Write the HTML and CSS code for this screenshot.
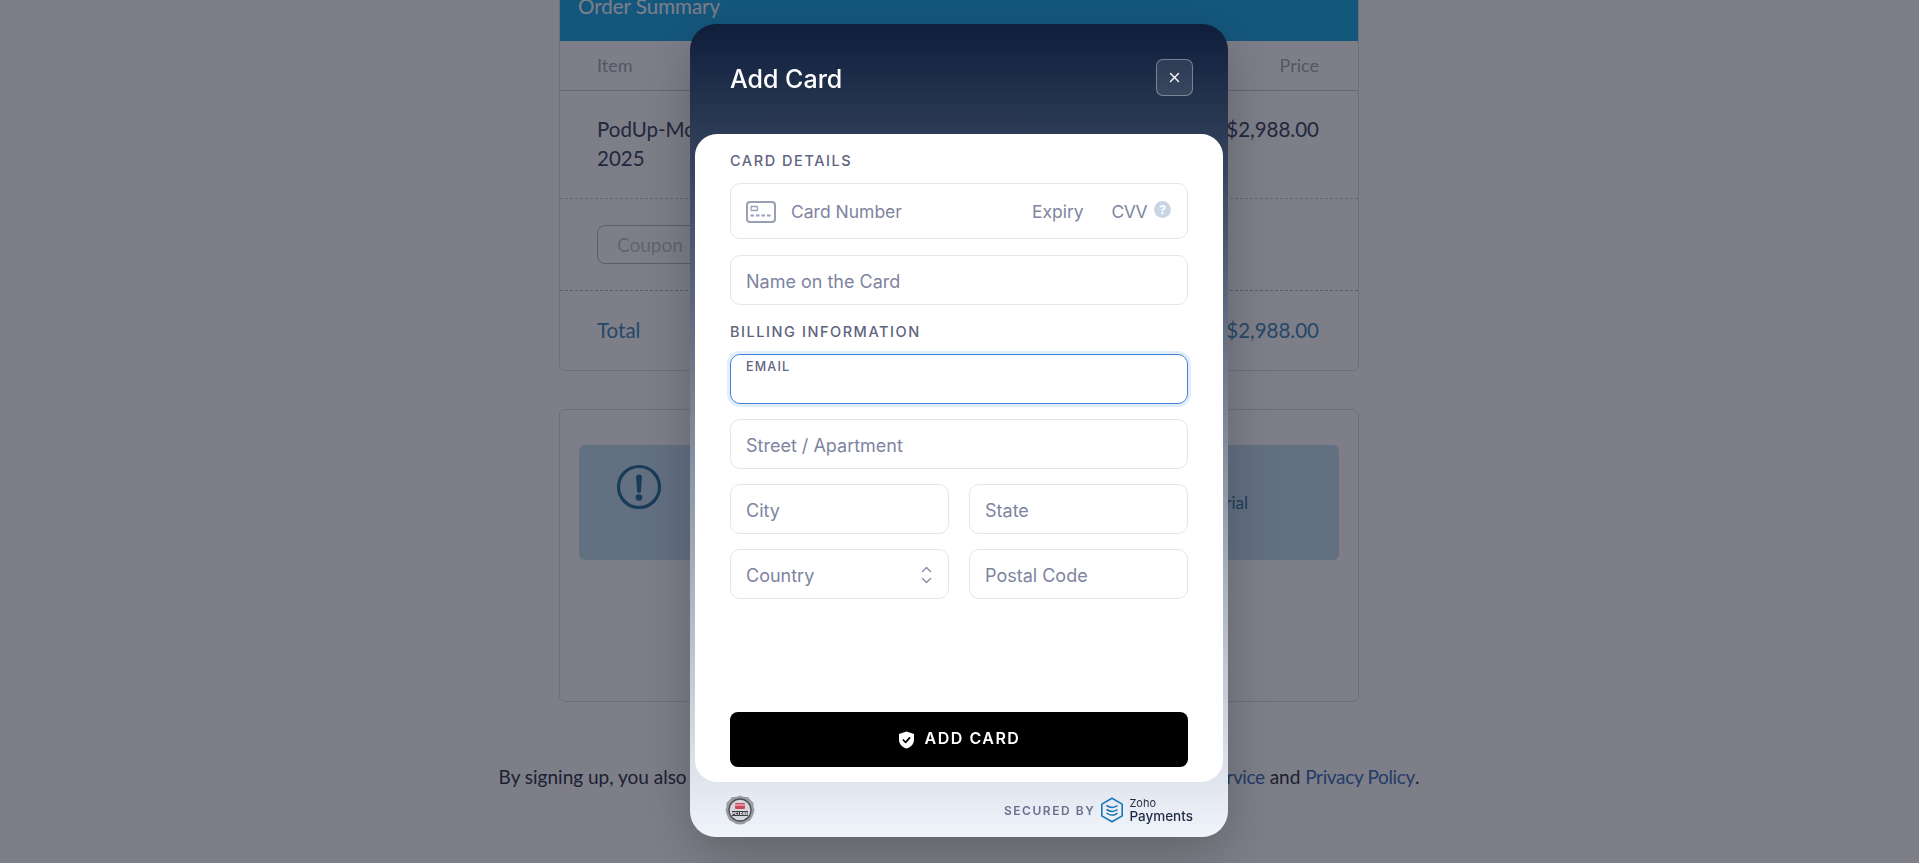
FILE: index.html
```html
<!DOCTYPE html>
<html lang="en">
<head>
<meta charset="utf-8">
<title>Add Card</title>
<link rel="stylesheet" href="styles.css">
</head>
<body>
<main class="page">
  <section class="card order">
    <header class="order-head">Order Summary</header>
    <div class="row row-head"><span>Item</span><span>Price</span></div>
    <div class="row row-item"><span class="item-name">PodUp-Monthly Plan 2025</span><span>$2,988.00</span></div>
    <div class="row row-coupon"><span class="coupon">Coupon</span></div>
    <div class="row row-total"><span>Total</span><span>$2,988.00</span></div>
  </section>
  <section class="card notice">
    <div class="alert">
      <svg class="alert-icon" width="46" height="46" viewBox="0 0 46 46" aria-hidden="true">
        <circle cx="23" cy="23" r="20.5" fill="none" stroke="currentColor" stroke-width="3.2"/>
        <path d="M23 10.5c-2 0-3 1.200-2.900 3l.9 13.500c.1 1.200.9 1.900 2 1.900s1.900-.7 2-1.900l.9-13.500c.1-1.800-.9-3-2.900-3z" fill="currentColor"/>
        <circle cx="23" cy="33.500" r="3.300" fill="currentColor"/>
      </svg>
      <p class="alert-text">No charge during the free trial</p>
    </div>
  </section>
  <p class="terms">By signing up, you also agree to the Zoho Payments Subscription Terms, and <a>Terms of Service</a> and <a>Privacy Policy</a>.</p>
</main>

<div class="overlay">
  <div class="modal">
    <header class="modal-head">
      <h1>Add Card</h1>
      <button class="close" type="button" aria-label="Close">
        <svg width="11" height="11" viewBox="0 0 11 11"><path d="M1.500 1.500l8 8M9.500 1.500l-8 8" stroke="#fff" stroke-width="1.400" stroke-linecap="round"/></svg>
      </button>
    </header>
    <form class="sheet">
      <h2 class="label label-first">CARD DETAILS</h2>
      <div class="field field-card">
        <svg class="card-icon" width="30" height="22" viewBox="0 0 30 22" aria-hidden="true">
          <rect x="1" y="1" width="28" height="20" rx="3" fill="none" stroke="#9a9fb8" stroke-width="2"/>
          <rect x="5" y="5.500" width="6.500" height="4" rx=".8" fill="none" stroke="#9a9fb8" stroke-width="1.300"/>
          <path d="M4.500 14.500h21" stroke="#9a9fb8" stroke-width="2" stroke-dasharray="3.500 2"/>
        </svg>
        <span class="ph card-number">Card Number</span>
        <span class="ph expiry">Expiry</span>
        <span class="ph cvv">CVV</span>
        <span class="help">?</span>
      </div>
      <div class="field"><span class="ph">Name on the Card</span></div>
      <h2 class="label label-billing">BILLING INFORMATION</h2>
      <div class="field field-focus"><span class="float">EMAIL</span></div>
      <div class="field"><span class="ph">Street / Apartment</span></div>
      <div class="pair">
        <div class="field"><span class="ph">City</span></div>
        <div class="field"><span class="ph">State</span></div>
      </div>
      <div class="pair">
        <div class="field field-select">
          <span class="ph">Country</span>
          <svg class="chev" width="13" height="20" viewBox="0 0 13 20" aria-hidden="true"><path d="M2.500 6.500l4-4 4 4M2.500 13.500l4 4 4-4" fill="none" stroke="#8c90a8" stroke-width="1.500" stroke-linecap="round" stroke-linejoin="round"/></svg>
        </div>
        <div class="field"><span class="ph">Postal Code</span></div>
      </div>
      <button class="submit" type="button">
        <svg width="17" height="18" viewBox="0 0 17 18" aria-hidden="true">
          <path d="M8.500 0.500l7.500 2.600v5.400c0 4.500-3.100 7.800-7.500 9-4.400-1.200-7.500-4.500-7.500-9V3.100z" fill="#fff"/>
          <path d="M5.300 9l2.300 2.400 4-4.500" fill="none" stroke="#000" stroke-width="1.700" stroke-linecap="round" stroke-linejoin="round"/>
        </svg>
        <span class="submit-text">ADD CARD</span>
      </button>
    </form>
    <footer class="modal-foot">
      <svg class="pci" width="30" height="30" viewBox="0 0 30 30" role="img" aria-label="PCI DSS">
        <polygon points="15,0.500 19,2 23,2 25.500,5 28.500,8 28.500,12 29.500,15 28.500,19 27,22.500 25,25.500 21.500,27 19,29 15,29.500 11,29 8,27 4.500,25.500 3,22.500 1.500,19 0.500,15 1.500,12 1.500,8 4.500,5 7,2 11,2" fill="#9a9ca3"/>
        <circle cx="15" cy="15" r="11" fill="#d6d7dc" stroke="#4c4e57" stroke-width="1.300"/>
        <rect x="10" y="8" width="10" height="6" rx="1" fill="#c9485a"/>
        <path d="M10 10h10" stroke="#f3d6da" stroke-width="1"/>
        <rect x="7" y="16" width="16" height="5" fill="#3c3e46"/>
        <text class="pci-text" x="15" y="20">PCI DSS</text>
      </svg>
      <div class="secured">
        <span class="secured-by">SECURED BY</span>
        <svg width="24" height="26" viewBox="0 0 24 26" aria-hidden="true">
          <path d="M12 1.200l10.200 5.900v11.800L12 24.800 1.800 18.900V7.100z" fill="none" stroke="#1b76b5" stroke-width="1.600" stroke-linejoin="round"/>
          <path d="M6.500 8.500c2 1.300 3.800 1.900 5.700 1.900 2 0 3.600-.6 5.300-1.700M6.500 12.500c2 1.300 3.800 1.900 5.700 1.900 2 0 3.600-.6 5.300-1.700M6.500 16c2 1.500 3.800 2.300 5.700 2.300 2 0 3.600-.8 5.300-2.100" fill="none" stroke="#1b76b5" stroke-width="1.500"/>
        </svg>
        <span class="zp"><span class="zp-zoho">Zoho</span><span class="zp-pay">Payments</span></span>
      </div>
    </footer>
  </div>
</div>
</body>
</html>
```
FILE: styles.css
```css
* { box-sizing: border-box; }
html, body { margin: 0; height: 100%; overflow: hidden; }
html { background: #fff; }
body { width: 1918px; background: #fff; color: #465068; font-family: "Lato", "Open Sans", sans-serif; font-size: 19px; }

.page { width: 800px; margin: -20px auto 0; }
.card { border: 1px solid #dcdfe6; border-radius: 6px; background: #fff; }
.order { overflow: hidden; }
.order-head { height: 60px; padding: 12px 18px; background: #2ab0e8; color: #fff; font-size: 20.500px; line-height: 26px; }
.row { display: flex; justify-content: space-between; padding: 0 39px 0 37px; }
.row-head { height: 50px; padding-bottom: 2px; align-items: center; font-size: 18px; color: #aaadb8; border-bottom: 1px solid #cdd0d8; }
.row-item { height: 108px; padding-top: 24px; line-height: 29px; color: #465068; font-size: 20.500px; border-bottom: 1px dashed #cdd0d8; }
.item-name { width: 205px; }
.row-coupon { height: 92px; align-items: center; border-bottom: 1px dashed #b8bcc6; }
.coupon { width: 400px; height: 39px; padding-left: 19px; border: 1px solid #b8bcc6; border-radius: 8px; font-size: 19px; line-height: 37px; color: #c6c9d2; }
.row-total { height: 79px; padding-bottom: 2px; align-items: center; font-size: 20.500px; color: #4a93c0; }

.notice { height: 293px; margin-top: 38px; padding: 35px 19px 0; }
.alert { display: flex; height: 115px; background: #c8e2f2; border-radius: 6px; color: #33789f; }
.alert-icon { flex: none; margin: 19px 0 0 37px; }
.alert-text { flex: 1; margin: 0; padding-right: 91px; text-align: right; font-size: 17px; line-height: 115px; color: #3c7aa0; }

.terms { width: 1000px; margin: 63px 0 0 -100px; text-align: center; font-size: 19px; color: #3b4150; white-space: nowrap; }
.terms a { color: #4a78c0; letter-spacing: -.35px; }

.overlay { position: fixed; inset: 0 1px 0 0; display: flex; justify-content: center; align-items: flex-start; padding-top: 24px; }
.overlay::before { content: ""; position: fixed; inset: 0; background: rgba(0, 2, 22, .51); }
.modal { position: relative; display: flex; flex-direction: column; width: 538px; height: 813px; padding: 0 5px; border-radius: 26px; background: linear-gradient(180deg, #0e1e3b 0%, #f0f4fb 100%); box-shadow: 0 16px 50px rgba(0, 0, 0, .22); font-family: "Inter", "Lato", sans-serif; }
.modal-head { display: flex; flex: none; justify-content: space-between; height: 110px; padding: 35px 30px 0 35px; }
.modal-head h1 { margin: 0; color: #fff; font-size: 25px; font-weight: 500; line-height: 40px; }
.close { display: flex; align-items: center; justify-content: center; width: 37px; height: 37px; padding: 0; border: 1px solid rgba(255, 255, 255, .35); border-radius: 7px; background: rgba(255, 255, 255, .1); }

.sheet { flex: 1; display: flex; flex-direction: column; padding: 0 35px 15px; border-radius: 22px; background: #fff; }
.label { margin: 0; color: #5f6480; font-size: 14.500px; font-weight: 500; letter-spacing: 1.550px; line-height: 18px; }
.label-first { margin-top: 18px; margin-bottom: 13px; }
.label-billing { margin-top: 3px; margin-bottom: 13px; }
.field { position: relative; display: flex; align-items: center; flex: none; height: 50px; margin-bottom: 15px; padding: 3px 16px 0 15px; border: 1px solid #e4e6ec; border-radius: 10px; }
.ph { color: #7e84a0; font-size: 18px; line-height: 22px; }
.field-card { height: 56px; margin-bottom: 16px; padding-top: 2px; }
.field-card .ph { font-size: 17.500px; }
.card-icon { flex: none; margin-right: 15px; }
.card-number { flex: 1; }
.expiry { margin-right: 28px; }
.cvv { letter-spacing: -.6px; }
.help { flex: none; width: 17px; height: 17px; margin: -5px 0 0 7px; border-radius: 50%; background: #c9d5e3; color: #fff; font-size: 12px; font-weight: 700; line-height: 17px; text-align: center; }
.field-focus { align-items: flex-start; padding-top: 5px; border-color: #3f83d6; box-shadow: 0 0 0 3px #e3eefb; }
.float { color: #5f6480; font-size: 12.500px; font-weight: 500; letter-spacing: 1.200px; line-height: 14px; }
.pair { display: grid; grid-template-columns: 1fr 1fr; gap: 20px; }
.field-select { justify-content: space-between; padding-right: 15px; }
.chev { margin-top: -1px; }
.submit { display: flex; align-items: center; justify-content: center; gap: 10px; height: 55px; margin-top: auto; border: 0; border-radius: 8px; background: #000; color: #fff; font-family: inherit; font-size: 16px; font-weight: 600; letter-spacing: 1.500px; }
.submit-text { margin-top: -3px; }

.modal-foot { display: flex; flex: 1; align-items: center; justify-content: space-between; max-height: 55px; padding: 1px 30px 0 30px; }
.pci-text { fill: #fff; font-size: 4px; font-weight: 700; text-anchor: middle; }
.secured { display: flex; align-items: center; gap: 5px; }
.secured-by { color: #6a6f8e; font-size: 12px; font-weight: 600; letter-spacing: 1.550px; }
.zp { display: flex; flex-direction: column; color: #1f2a44; }
.zp-zoho { font-size: 11px; line-height: 12px; }
.zp-pay { font-size: 13.500px; font-weight: 500; line-height: 15px; }
```
